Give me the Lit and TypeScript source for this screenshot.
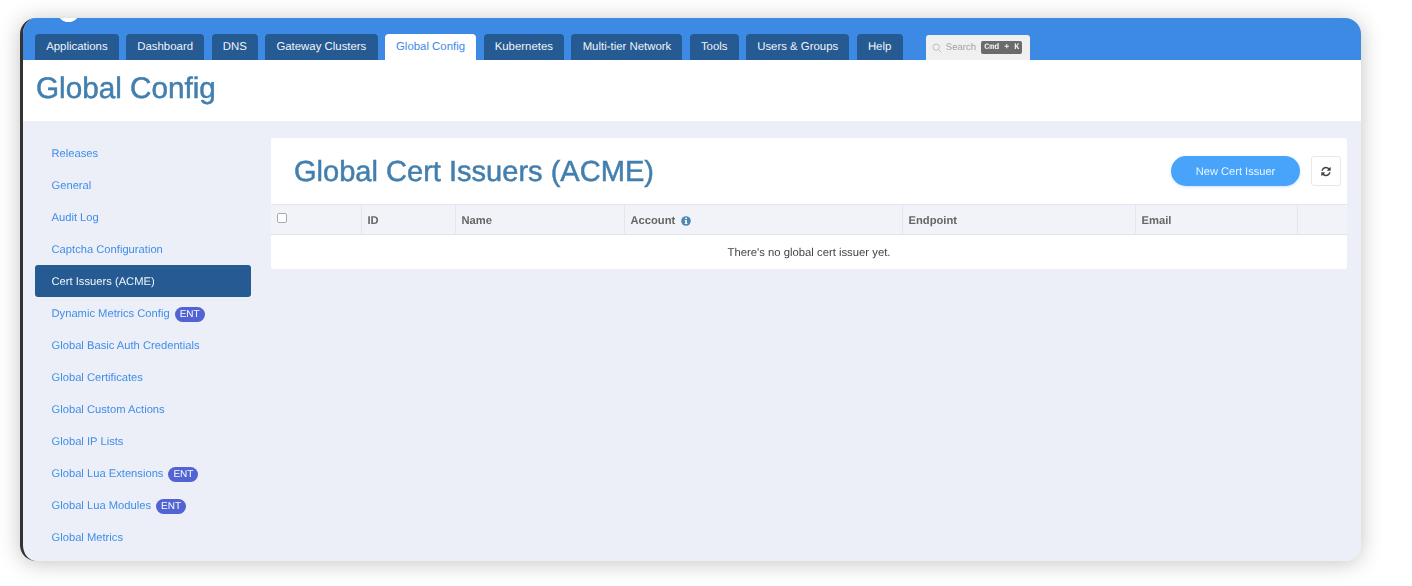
import { LitElement, html, css } from "lit";
import { customElement } from "lit/decorators.js";

const TABS = ["Applications", "Dashboard", "DNS", "Gateway Clusters", "Global Config", "Kubernetes", "Multi-tier Network", "Tools", "Users & Groups", "Help"];
const SIDE: [string, boolean][] = [
  ["Releases", false], ["General", false], ["Audit Log", false], ["Captcha Configuration", false],
  ["Cert Issuers (ACME)", false], ["Dynamic Metrics Config", true], ["Global Basic Auth Credentials", false],
  ["Global Certificates", false], ["Global Custom Actions", false], ["Global IP Lists", false],
  ["Global Lua Extensions", true], ["Global Lua Modules", true], ["Global Metrics", false],
];
const COLS = ["", "ID", "Name", "Account", "Endpoint", "Email", ""];

@customElement("app-root")
export class AppRoot extends LitElement {
  static styles = css`
    :host { display: block; width: 1412px; height: 586px; background: #fff; overflow: hidden; font-family: "Liberation Sans", Arial, sans-serif; text-rendering: geometricPrecision; }
    * { box-sizing: border-box; }
    .page { padding: 18px 0 0 20px; }
    .shadow { width: 1341px; height: 543px; border-radius: 16px; box-shadow: 0 2px 22px rgba(0,0,0,.24); }
    .window {
      position: relative; width: 1341px; height: 543px; border-radius: 16px; overflow: hidden;
      background: #eceff7; border-left: 3px solid #333;
      display: flex; flex-direction: column; filter: blur(0.5px);
    }
    .logo { position: absolute; left: 34px; top: -19px; width: 23px; height: 23px; border-radius: 50%; background: #fff; }
    .nav { height: 42px; background: #3d8ae5; padding: 16px 0 0 12px; display: flex; gap: 7.3px; flex: none; }
    .tab {
      height: 26px; padding: 1px 11.2px 0; background: #255a92; color: #f2f6fb; font-size: 11.4px; line-height: 25px;
      border-radius: 4px 4px 0 0; white-space: nowrap; flex: none;
    }
    .tab.on { background: #fff; color: #3d8ae5; }
    .search {
      margin: 1px 0 0 16px; width: 104px; height: 25px; background: #f0f0f1; border-radius: 3px 3px 0 0;
      display: flex; align-items: center; gap: 4px; padding-left: 6px; color: #a3a3a3; font-size: 9.6px;
    }
    .kbd { background: #6b6b6b; color: #f0f0f0; font: bold 8.4px "Liberation Mono", monospace; padding: 0 3px; height: 13px; line-height: 13px; border-radius: 2px; margin-left: 1px; white-space: nowrap; }
    .head { height: 61px; background: #fff; flex: none; padding: 11px 0 0 13px; }
    h1 { margin: 0; font-size: 29.7px; line-height: 36px; font-weight: 400; color: #427fae; -webkit-text-stroke: .5px #427fae; }
    .body { flex: 1; display: flex; min-height: 0; padding: 16px 14px 0 12px; gap: 20px; }
    .side { width: 216px; flex: none; display: flex; flex-direction: column; }
    .item { height: 32px; flex: none; padding: 2px 0 0 16.5px; font-size: 11.2px; color: #3f8ee9; border-radius: 3px; white-space: nowrap; display: flex; align-items: center; gap: 5px; }
    .item.on { background: #255a92; color: #f2f6fb; }
    .ent { background: #5263d3; color: #fff; font-size: 10px; line-height: 15px; height: 15px; padding: 0 5px; border-radius: 8px; }
    .panel { width: 1076px; margin-top: 1px; align-self: flex-start; background: #fff; border-radius: 2px; }
    .ptop { height: 66px; display: flex; align-items: center; padding: 0 6px 0 23px; }
    h2 { margin: 3px 0 0; font-size: 29.05px; font-weight: 400; color: #427fae; -webkit-text-stroke: .5px #427fae; flex: 1; white-space: nowrap; }
    .btn { width: 129px; height: 30px; border-radius: 15px; background: #48a3fb; color: #eef6ff; font-size: 11.1px; padding-top: 1px; display: flex; align-items: center; justify-content: center; box-shadow: 0 1px 3px rgba(72,163,251,.3); }
    .refresh { width: 30px; height: 30px; margin-left: 11px; border: 1px solid #e6e8ec; border-radius: 3px; display: flex; align-items: center; justify-content: center; background: #fff; }
    .refresh svg { width: 10px; height: 11px; fill: #444; }
    .thead { display: grid; grid-template-columns: 90px 94px 169px 278px 233px 162px 50px; height: 31px; background: #f1f3f8; border-top: 1px solid #e3e6ec; border-bottom: 1px solid #dfe4ec; }
    .th { border-left: 1px solid #e3e6ec; padding: 3px 0 0 5.5px; font-size: 11.2px; font-weight: 700; color: #666; display: flex; align-items: center; gap: 6px; }
    .th:first-child { border-left: 0; padding-left: 6px; }
    .cb { width: 10px; height: 10px; border: 1px solid #aaa; border-radius: 2px; background: #fff; margin: -6px 0 0 0; }
    .th svg { width: 10px; height: 10px; }
    .empty { height: 34px; padding-top: 1px; line-height: 34px; text-align: center; font-size: 11.3px; color: #444; }
  `;

  render() {
    return html`<div class="page"><div class="shadow"><div class="window">
      <div class="logo"></div>
      <div class="nav">
        ${TABS.map((t) => html`<div class="tab ${t === "Global Config" ? "on" : ""}">${t}</div>`)}
        <div class="search">
          <svg width="10" height="10" viewBox="0 0 12 12" fill="none" stroke="#bbb" stroke-width="1.1"><circle cx="5" cy="5" r="3.8"/><path d="M8 8l3.2 3.2"/></svg>
          <span>Search</span><span class="kbd">Cmd + K</span>
        </div>
      </div>
      <div class="head"><h1>Global Config</h1></div>
      <div class="body">
        <div class="side">
          ${SIDE.map(([t, e]) => html`<div class="item ${t === "Cert Issuers (ACME)" ? "on" : ""}"><span>${t}</span>${e ? html`<span class="ent">ENT</span>` : ""}</div>`)}
        </div>
        <div class="panel">
          <div class="ptop">
            <h2>Global Cert Issuers (ACME)</h2>
            <div class="btn">New Cert Issuer</div>
            <div class="refresh"><svg viewBox="0 0 1536 1792"><path d="M1511 1056q0 5-1 7-64 268-268 434.5t-478 166.5q-146 0-282.5-55t-243.5-157l-129 129q-19 19-45 19t-45-19-19-45v-448q0-26 19-45t45-19h448q26 0 45 19t19 45-19 45l-137 137q71 66 161 102t187 36q134 0 250-65t186-179q11-17 53-117 8-23 30-23h192q13 0 22.5 9.5t9.5 22.5zm25-800v448q0 26-19 45t-45 19h-448q-26 0-45-19t-19-45 19-45l138-138q-148-137-349-137-134 0-250 65t-186 179q-11 17-53 117-8 23-30 23h-199q-13 0-22.5-9.5t-9.5-22.5v-7q65-268 270-434.5t480-166.5q146 0 284 55.5t245 156.5l130-129q19-19 45-19t45 19 19 45z"/></svg></div>
          </div>
          <div class="thead">
            ${COLS.map((c, i) => html`<div class="th">${i === 0 ? html`<span class="cb"></span>` : c}${c === "Account" ? html`<svg viewBox="0 0 10 10"><circle cx="5" cy="5" r="4.8" fill="#4c87b5"/><rect x="4.2" y="1.6" width="1.7" height="1.5" fill="#fff"/><path d="M3.6 4h2.3v3.2h.6V8H3.6v-.8h.6V4.8h-.6z" fill="#fff"/></svg>` : ""}</div>`)}
          </div>
          <div class="empty">There's no global cert issuer yet.</div>
        </div>
      </div>
    </div></div></div>`;
  }
}
